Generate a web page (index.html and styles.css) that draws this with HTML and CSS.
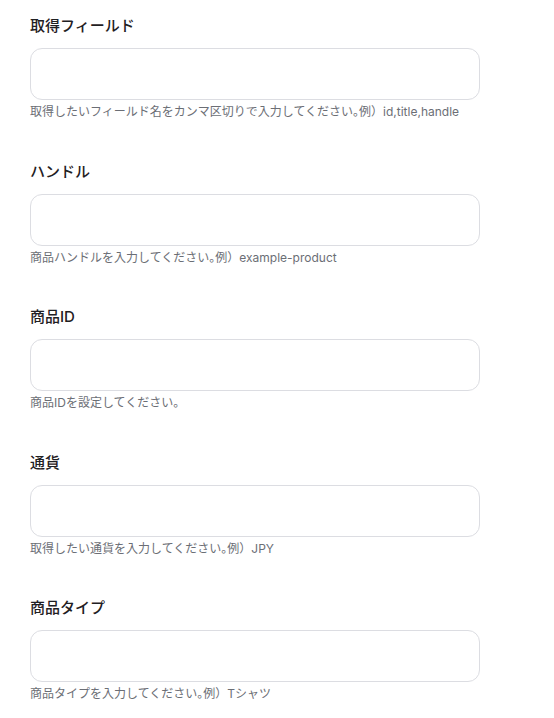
FILE: index.html
```html
<!DOCTYPE html>
<html lang="ja">
<head>
<meta charset="utf-8">
<link rel="stylesheet" href="styles.css">
</head>
<body>
<div class="form">
  <div class="field">
    <label class="label">取得フィールド</label>
    <div class="input"></div>
    <p class="help">取得したいフィールド名をカンマ区切りで入力してください<span class="half">。</span>例）id,title,handle</p>
  </div>
  <div class="field">
    <label class="label">ハンドル</label>
    <div class="input"></div>
    <p class="help">商品ハンドルを入力してください<span class="half">。</span>例）example-product</p>
  </div>
  <div class="field">
    <label class="label">商品ID</label>
    <div class="input"></div>
    <p class="help">商品IDを設定してください。</p>
  </div>
  <div class="field">
    <label class="label">通貨</label>
    <div class="input"></div>
    <p class="help">取得したい通貨を入力してください<span class="half">。</span>例）JPY</p>
  </div>
  <div class="field">
    <label class="label">商品タイプ</label>
    <div class="input"></div>
    <p class="help">商品タイプを入力してください<span class="half">。</span>例）Tシャツ</p>
  </div>
</div>
</body>
</html>
```
FILE: styles.css
```css
html, body {
  margin: 0;
  padding: 0;
  background: #ffffff;
}
body {
  font-family: Inter, "Noto Sans CJK JP", sans-serif;
  color: #1f2023;
}
.form {
  display: flex;
  flex-direction: column;
  gap: 39.5px;
  padding: 15px 0 0 30px;
  width: 450px;
}
.field {
  display: flex;
  flex-direction: column;
}
.label {
  font-size: 15px;
  line-height: 22px;
  font-weight: 500;
  color: #1f2023;
}
.input {
  margin-top: 11px;
  height: 50px;
  border: 1px solid #dcdde2;
  border-radius: 12px;
  background: #fff;
}
.help {
  margin: 3px 0 0;
  font-size: 12px;
  line-height: 18px;
  color: #6b6e75;
  white-space: nowrap;
}
.half {
  font-feature-settings: "halt";
}
```
